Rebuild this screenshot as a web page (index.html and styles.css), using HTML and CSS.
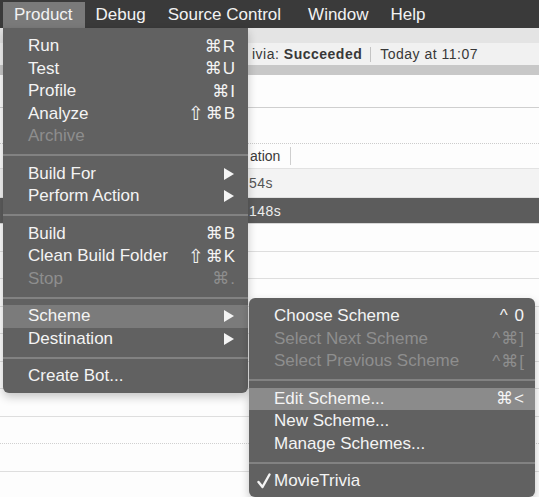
FILE: index.html
```html
<!DOCTYPE html>
<html>
<head>
<meta charset="utf-8">
<link rel="stylesheet" href="styles.css">
</head>
<body>
<div class="screen">
  <div class="menubar">
    <span class="mb-item active">Product</span>
    <span class="mb-item">Debug</span>
    <span class="mb-item">Source Control</span>
    <span class="mb-item">Window</span>
    <span class="mb-item">Help</span>
  </div>
  <div class="window">
    <div class="toolbar-top"></div>
    <div class="status">
      <span>ivia: <b>Succeeded</b></span>
      <span class="vsep"></span>
      <span>Today at 11:07</span>
    </div>
    <div class="band"></div>
    <div class="blank b1"></div>
    <div class="blank b2"></div>
    <div class="thead"><span class="col">ation</span></div>
    <div class="trow alt">54s</div>
    <div class="trow selected">148s</div>
    <div class="lrow"></div>
    <div class="lrow"></div>
    <div class="lrow"></div>
    <div class="lrow"></div>
    <div class="lrow"></div>
    <div class="lrow"></div>
    <div class="lrow"></div>
    <div class="lrow dotted"></div>
    <div class="lrow"></div>
  </div>

  <div class="menu main-menu">
    <div class="mi"><span>Run</span><span class="sc">⌘R</span></div>
    <div class="mi"><span>Test</span><span class="sc">⌘U</span></div>
    <div class="mi"><span>Profile</span><span class="sc">⌘I</span></div>
    <div class="mi"><span>Analyze</span><span class="sc"><span class="shift">⇧</span>⌘B</span></div>
    <div class="mi disabled"><span>Archive</span></div>
    <div class="sep"></div>
    <div class="mi"><span>Build For</span><svg class="arrow" viewBox="0 0 10 12" width="10" height="12"><polygon points="0,0 10,6 0,12" /></svg></div>
    <div class="mi"><span>Perform Action</span><svg class="arrow" viewBox="0 0 10 12" width="10" height="12"><polygon points="0,0 10,6 0,12" /></svg></div>
    <div class="sep"></div>
    <div class="mi"><span>Build</span><span class="sc">⌘B</span></div>
    <div class="mi"><span>Clean Build Folder</span><span class="sc"><span class="shift">⇧</span>⌘K</span></div>
    <div class="mi disabled"><span>Stop</span><span class="sc">⌘.</span></div>
    <div class="sep"></div>
    <div class="mi hl"><span>Scheme</span><svg class="arrow" viewBox="0 0 10 12" width="10" height="12"><polygon points="0,0 10,6 0,12" /></svg></div>
    <div class="mi"><span>Destination</span><svg class="arrow" viewBox="0 0 10 12" width="10" height="12"><polygon points="0,0 10,6 0,12" /></svg></div>
    <div class="sep"></div>
    <div class="mi"><span>Create Bot...</span></div>
  </div>

  <div class="menu sub-menu">
    <div class="mi"><span>Choose Scheme</span><span class="sc">^ 0</span></div>
    <div class="mi disabled"><span>Select Next Scheme</span><span class="sc">^⌘]</span></div>
    <div class="mi disabled"><span>Select Previous Scheme</span><span class="sc">^⌘[</span></div>
    <div class="sep"></div>
    <div class="mi hl2"><span>Edit Scheme...</span><span class="sc">⌘&lt;</span></div>
    <div class="mi"><span>New Scheme...</span></div>
    <div class="mi"><span>Manage Schemes...</span></div>
    <div class="sep"></div>
    <div class="mi checked"><svg class="check" viewBox="0 0 14 16" width="14" height="16"><path d="M1.5 9 L5.5 14 L12.5 1.5" fill="none" stroke="#f4f4f4" stroke-width="2.4" stroke-linecap="round" stroke-linejoin="round"/></svg><span>MovieTrivia</span></div>
  </div>
</div>
</body>
</html>
```
FILE: styles.css
```css
* { box-sizing: border-box; }
html, body { margin: 0; padding: 0; background: #fdfdfd; }
.screen {
  position: relative;
  width: 539px;
  height: 497px;
  overflow: hidden;
  font-family: "Liberation Sans", "DejaVu Sans", sans-serif;
  background: #fdfdfd;
}
.menubar {
  height: 28px;
  background: #3a3a3a;
  display: flex;
  align-items: stretch;
  padding: 2px 0 0 3px;
  color: #f2f2f2;
  font-size: 17px;
}
.mb-item {
  display: flex;
  align-items: center;
  padding: 0 11px;
}
.mb-item:nth-child(3) { margin-right: 5px; }
.mb-item.active { background: #7a7a7a; padding-right: 12px; }

.window { display: flex; flex-direction: column; }
.toolbar-top { height: 15px; background: #e4e4e4; }
.status {
  height: 22px;
  background: #f1f1f1;
  display: flex;
  align-items: center;
  padding-left: 252px;
  font-size: 14px;
  color: #383838;
  letter-spacing: 0.5px;
}
.status b { font-weight: bold; }
.vsep {
  width: 1px;
  height: 15px;
  background: #c4c4c4;
  margin: 0 9px 0 8px;
}
.band { height: 10px; background: #c8c8c8; }
.blank { background: #fdfdfd; }
.b1 { height: 33px; border-bottom: 1px solid #cfcfcf; }
.b2 { height: 36px; border-bottom: 1px dotted #cccccc; }
.thead {
  height: 25px;
  display: flex;
  align-items: center;
  padding-left: 250px;
  font-size: 14px;
  color: #3a3a3a;
  border-bottom: 1px solid #e2e2e2;
}
.thead .col {
  padding-right: 10px;
  border-right: 1px solid #cfcfcf;
  height: 18px;
  display: flex;
  align-items: center;
}
.trow {
  height: 29px;
  display: flex;
  align-items: center;
  padding-left: 249px;
  font-size: 14px;
  letter-spacing: 0.5px;
}
.trow.alt { background: #f3f3f3; color: #555; border-bottom: 1px solid #e0e0e0; }
.trow.selected { height: 26px; background: #5c5c5c; color: #eeeeee; border-bottom: 1px solid #d8d8d8; }
.lrow { height: 27.5px; border-bottom: 1px solid #dedede; flex: none; }
.lrow:first-of-type { height: 29px; }
.lrow.dotted { border-bottom: 1px dotted #d0d0d0; }

.menu {
  position: absolute;
  background: #616161;
  color: #f4f4f4;
  font-size: 17px;
  box-shadow: 0 4px 10px rgba(0,0,0,0.22);
}
.main-menu {
  left: 3px;
  top: 28px;
  width: 245px;
  padding: 7px 0 5px;
  border-radius: 0 0 6px 6px;
}
.sub-menu {
  left: 249px;
  top: 298px;
  width: 286px;
  padding: 7px 0 4px;
  border-radius: 6px;
}
.mi {
  height: 22.5px;
  display: flex;
  align-items: center;
  justify-content: space-between;
  padding: 0 12px 0 25px;
  position: relative;
  white-space: nowrap;
}
.sub-menu .mi { padding-right: 10px; }
.mi.disabled { color: #8e8e8e; }
.mi.hl { background: #7b7b7b; }
.mi.hl2 { background: #8b8b8b; }
.sc { font-size: 17px; letter-spacing: 1px; display: flex; align-items: center; }
.shift { font-size: 19px; margin-right: 1px; }
.arrow { fill: #f4f4f4; margin-right: 2px; }
.sep {
  height: 15px;
  display: flex;
  align-items: center;
}
.sep::before {
  content: "";
  display: block;
  width: 100%;
  height: 2px;
  background: #828282;
}
.check {
  position: absolute;
  left: 8px;
  top: 3px;
}
```
